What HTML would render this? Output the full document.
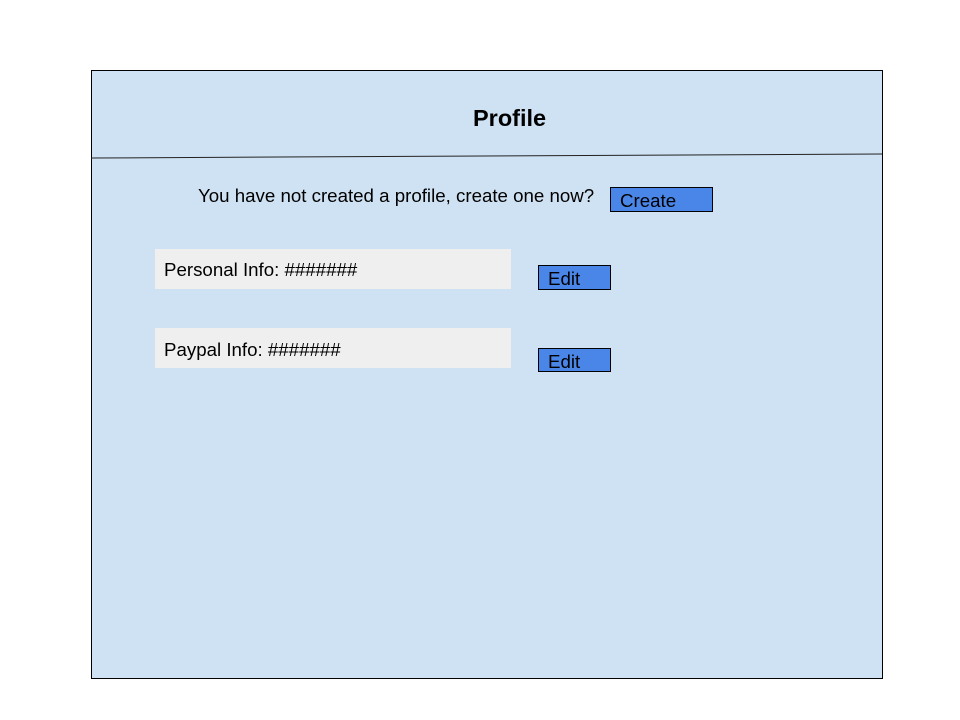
<!DOCTYPE html>
<html><head><meta charset="utf-8"><style>
body{margin:0;width:960px;height:720px;background:#fff;position:relative;font-family:"Liberation Sans",Arial,sans-serif;overflow:hidden}
.box{position:absolute;left:91px;top:70px;width:790px;height:607px;background:#cfe2f3;border:1px solid #000}
.t{position:absolute;white-space:nowrap;color:#000}
.btn{position:absolute;background:#4a86e8;border:1px solid #000;box-sizing:border-box;font-size:18.7px;padding-left:9px;line-height:22px}
.f{position:absolute;background:#efefef;left:155px;width:356px;height:40px;font-size:18.7px;box-sizing:border-box;padding-left:9px;line-height:42px}
</style></head><body>
<div class="box"></div>
<svg style="position:absolute;left:0;top:0" width="960" height="720"><line x1="91" y1="158" x2="882" y2="154" stroke="#222" stroke-width="1"/></svg>
<div class="t" style="left:473px;top:105px;font-size:23.5px;font-weight:bold">Profile</div>
<div class="t" style="left:198px;top:185px;font-size:18.7px">You have not created a profile, create one now?</div>
<div class="btn" style="left:610px;top:187px;width:103px;height:25px;line-height:26px">Create</div>
<div class="f" style="top:249px;line-height:41px">Personal Info: #######</div>
<div class="btn" style="left:538px;top:265px;width:73px;height:25px;line-height:25px">Edit</div>
<div class="f" style="top:328px;line-height:43px">Paypal Info: #######</div>
<div class="btn" style="left:538px;top:348px;width:73px;height:24px;line-height:25px">Edit</div>
</body></html>
